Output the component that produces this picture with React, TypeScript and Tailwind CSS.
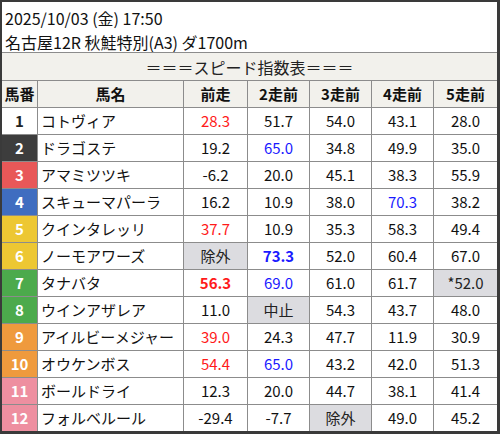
import React from "react";

type Cell = { v: string; c?: "r" | "b" | "R" | "B" | "g" };

const rows: { n: number; name: string; bg: string; fg: string; cells: Cell[] }[] = [
  { n: 1, name: "コトヴィア", bg: "bg-white", fg: "text-[#222]", cells: [{ v: "28.3", c: "r" }, { v: "51.7" }, { v: "54.0" }, { v: "43.1" }, { v: "28.0" }] },
  { n: 2, name: "ドラゴステ", bg: "bg-[#3d3d3d]", fg: "text-white", cells: [{ v: "19.2" }, { v: "65.0", c: "b" }, { v: "34.8" }, { v: "49.9" }, { v: "35.0" }] },
  { n: 3, name: "アマミツツキ", bg: "bg-[#e85858]", fg: "text-white", cells: [{ v: "-6.2" }, { v: "20.0" }, { v: "45.1" }, { v: "38.3" }, { v: "55.9" }] },
  { n: 4, name: "スキューマパーラ", bg: "bg-[#3f6dc0]", fg: "text-white", cells: [{ v: "16.2" }, { v: "10.9" }, { v: "38.0" }, { v: "70.3", c: "b" }, { v: "38.2" }] },
  { n: 5, name: "クインタレッリ", bg: "bg-[#edc733]", fg: "text-white", cells: [{ v: "37.7", c: "r" }, { v: "10.9" }, { v: "35.3" }, { v: "58.3" }, { v: "49.4" }] },
  { n: 6, name: "ノーモアワーズ", bg: "bg-[#edc733]", fg: "text-white", cells: [{ v: "除外", c: "g" }, { v: "73.3", c: "B" }, { v: "52.0" }, { v: "60.4" }, { v: "67.0" }] },
  { n: 7, name: "タナバタ", bg: "bg-[#4caa4c]", fg: "text-white", cells: [{ v: "56.3", c: "R" }, { v: "69.0", c: "b" }, { v: "61.0" }, { v: "61.7" }, { v: "*52.0", c: "g" }] },
  { n: 8, name: "ウインアザレア", bg: "bg-[#4caa4c]", fg: "text-white", cells: [{ v: "11.0" }, { v: "中止", c: "g" }, { v: "54.3" }, { v: "43.7" }, { v: "48.0" }] },
  { n: 9, name: "アイルビーメジャー", bg: "bg-[#ef9a3d]", fg: "text-white", cells: [{ v: "39.0", c: "r" }, { v: "24.3" }, { v: "47.7" }, { v: "11.9" }, { v: "30.9" }] },
  { n: 10, name: "オウケンボス", bg: "bg-[#ef9a3d]", fg: "text-white", cells: [{ v: "54.4", c: "r" }, { v: "65.0", c: "b" }, { v: "43.2" }, { v: "42.0" }, { v: "51.3" }] },
  { n: 11, name: "ボールドライ", bg: "bg-[#ee8fa0]", fg: "text-white", cells: [{ v: "12.3" }, { v: "20.0" }, { v: "44.7" }, { v: "38.1" }, { v: "41.4" }] },
  { n: 12, name: "フォルベルール", bg: "bg-[#ee8fa0]", fg: "text-white", cells: [{ v: "-29.4" }, { v: "-7.7" }, { v: "除外", c: "g" }, { v: "49.0" }, { v: "45.2" }] },
];

function cellClass(c?: Cell["c"]) {
  switch (c) {
    case "r":
      return "bg-white text-[#ff1a1a]";
    case "b":
      return "bg-white text-[#1a1aff]";
    case "R":
      return "bg-white text-[#ff1a1a] font-bold";
    case "B":
      return "bg-white text-[#1a1aff] font-bold";
    case "g":
      return "bg-[#dcdce0] text-[#222]";
    default:
      return "bg-white text-[#111]";
  }
}

export default function App() {
  const font = { fontFamily: '"Noto Sans CJK JP", "Noto Sans", sans-serif' };
  return (
    <div
      className="w-[500px] h-[434px] bg-white border-l-2 border-t-2 border-r-[3px] border-b-[3px] border-[#3a3a3a] flex flex-col overflow-hidden"
      style={font}
    >
      <div className="h-[50px] px-[3px] pt-[4px] text-[16px] leading-[24px] text-[#111]">
        <div>2025/10/03 (金) 17:50</div>
        <div>名古屋12R 秋鮭特別(A3) ダ1700m</div>
      </div>
      <div className="grid grid-cols-[35px_145px_63px_61px_61px_61px_63px] gap-px bg-[#8c8c8c] pt-px text-[15px]">
        <div className="col-span-7 h-[27px] bg-[#f2f1ec] flex items-center justify-center text-[16px] text-[#222]">
          ＝＝＝スピード指数表＝＝＝
        </div>
        {["馬番", "馬名", "前走", "2走前", "3走前", "4走前", "5走前"].map((h) => (
          <div key={h} className="h-[26px] bg-[#f2f1ec] flex items-center justify-center font-bold text-[#111]">
            {h}
          </div>
        ))}
        {rows.map((r) => (
          <React.Fragment key={r.n}>
            <div className={`h-[26px] flex items-center justify-center font-bold ${r.bg} ${r.fg}`}>{r.n}</div>
            <div className="h-[26px] flex items-center pl-[3px] bg-white text-[#111] whitespace-nowrap">{r.name}</div>
            {r.cells.map((c, i) => (
              <div key={i} className={`h-[26px] flex items-center justify-center ${cellClass(c.c)}`}>
                {c.v}
              </div>
            ))}
          </React.Fragment>
        ))}
      </div>
    </div>
  );
}
